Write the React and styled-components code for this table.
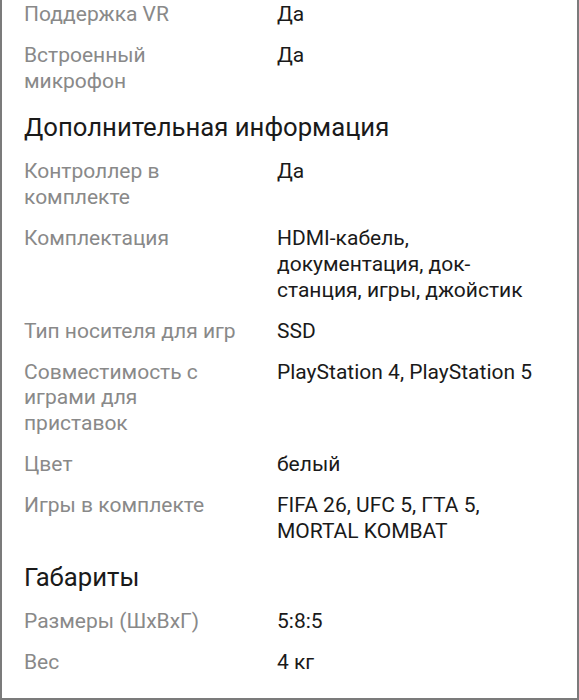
import React from 'react';
import styled, { createGlobalStyle } from 'styled-components';

const GlobalStyle = createGlobalStyle`
  html, body {
    margin: 0;
    padding: 0;
    background: #ffffff;
  }
  body {
    font-family: Roboto, "Noto Sans", "Liberation Sans", sans-serif;
    -webkit-font-smoothing: antialiased;
  }
`;

const Frame = styled.div`
  width: 579px;
  height: 700px;
  box-sizing: border-box;
  border-left: 2px solid #7b7b7b;
  border-right: 2px solid #7b7b7b;
  border-bottom: 2px solid #7b7b7b;
  overflow: hidden;
  background: #ffffff;
`;

const Content = styled.div`
  padding: 2px 0 0 22px;
`;

const Section = styled.section`
  & + & {
    margin-top: 18px;
  }
`;

const SectionTitle = styled.h2`
  margin: 0 0 17px;
  font-size: 25.7px;
  line-height: 30px;
  font-weight: 400;
  color: #1a1a1a;
`;

const SpecList = styled.dl`
  margin: 0;
  display: flex;
  flex-direction: column;
  gap: 15.3px;
`;

const SpecRow = styled.div`
  display: grid;
  grid-template-columns: 220px 270px;
  column-gap: 33px;
  font-size: 21px;
  line-height: 25.7px;
`;

const Label = styled.dt`
  margin: 0;
  color: #898989;
`;

const Value = styled.dd`
  margin: 0;
  color: #1a1a1a;
`;

const sections = [
  {
    items: [
      ['Поддержка VR', 'Да'],
      ['Встроенный микрофон', 'Да'],
    ],
  },
  {
    title: 'Дополнительная информация',
    items: [
      ['Контроллер в комплекте', 'Да'],
      ['Комплектация', 'HDMI-кабель, документация, док-станция, игры, джойстик'],
      ['Тип носителя для игр', 'SSD'],
      ['Совместимость с играми для приставок', 'PlayStation 4, PlayStation 5'],
      ['Цвет', 'белый'],
      ['Игры в комплекте', 'FIFA 26, UFC 5, ГТА 5, MORTAL KOMBAT'],
    ],
  },
  {
    title: 'Габариты',
    items: [
      ['Размеры (ШхВхГ)', '5:8:5'],
      ['Вес', '4 кг'],
    ],
  },
];

const App = () => (
  <>
    <GlobalStyle />
    <Frame>
      <Content>
        {sections.map((section, i) => (
          <Section key={i}>
            {section.title && <SectionTitle>{section.title}</SectionTitle>}
            <SpecList>
              {section.items.map(([label, value]) => (
                <SpecRow key={label}>
                  <Label>{label}</Label>
                  <Value>{value}</Value>
                </SpecRow>
              ))}
            </SpecList>
          </Section>
        ))}
      </Content>
    </Frame>
  </>
);

export default App;
